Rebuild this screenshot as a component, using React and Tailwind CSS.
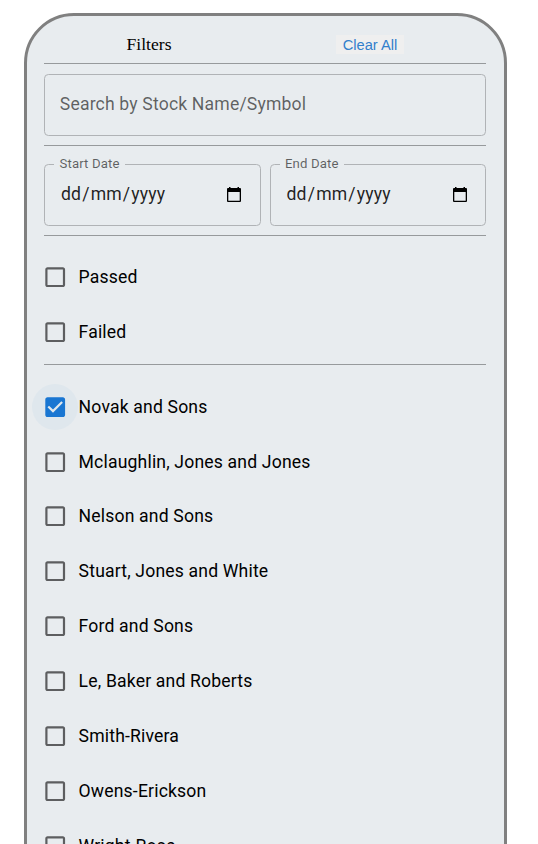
import { useState } from 'react';

const COMPANIES = [
  'Novak and Sons',
  'Mclaughlin, Jones and Jones',
  'Nelson and Sons',
  'Stuart, Jones and White',
  'Ford and Sons',
  'Le, Baker and Roberts',
  'Smith-Rivera',
  'Owens-Erickson',
  'Wright-Rose',
];

function Divider() {
  return <hr className="h-px w-full shrink-0 border-0 bg-[#979a9c]" />;
}

function CheckRow({ label, checked, focused, onToggle }) {
  return (
    <button
      type="button"
      role="checkbox"
      aria-checked={checked}
      onClick={onToggle}
      className="-ml-[12.1px] flex h-[54.85px] shrink-0 items-center text-left text-[17.6px] leading-[26.4px] tracking-[0.165px] text-black"
    >
      <span
        className={
          focused
            ? 'flex size-[46.2px] items-center justify-center rounded-full bg-[#1976d2]/4'
            : 'flex size-[46.2px] items-center justify-center rounded-full'
        }
      >
        <svg viewBox="0 0 24 24" className={checked ? 'size-[26.4px] fill-[#1976d2]' : 'size-[26.4px] fill-black/60'}>
          {checked ? (
            <path d="M19 3H5c-1.11 0-2 .9-2 2v14c0 1.1.89 2 2 2h14c1.11 0 2-.9 2-2V5c0-1.1-.89-2-2-2zm-9 14l-5-5 1.41-1.41L10 14.17l7.59-7.59L19 8l-9 9z" />
          ) : (
            <path d="M19 5v14H5V5h14m0-2H5c-1.1 0-2 .9-2 2v14c0 1.1.9 2 2 2h14c1.1 0 2-.9 2-2V5c0-1.1-.9-2-2-2z" />
          )}
        </svg>
      </span>
      <span className="pl-[0.5px] whitespace-nowrap">{label}</span>
    </button>
  );
}

function DateField({ label }) {
  return (
    <fieldset className="-mt-[7px] h-[69px] min-w-0 flex-1 rounded-[4.4px] border border-[#b0b3b6] pl-[9px]">
      <legend className="h-[14px] px-[5.5px] text-[13.2px] leading-[14px] tracking-[0.124px] text-black/60">
        {label}
      </legend>
      <div className="flex items-center justify-between pt-[10px] pr-[18.5px] pl-[6px]">
        <span className="flex text-[17.6px] leading-[26px] tracking-[0.165px] text-black/87">
          <span className="px-[1px]">dd</span>
          <span>/</span>
          <span className="px-[1px]">mm</span>
          <span>/</span>
          <span className="px-[1px]">yyyy</span>
        </span>
        <svg viewBox="0 0 14 15" className="mt-px h-[15px] w-[14px] fill-black">
          <path
            fillRule="evenodd"
            d="M2 0h1.5v1h7V0H12v1h1a1 1 0 0 1 1 1v12a1 1 0 0 1-1 1H1a1 1 0 0 1-1-1V2a1 1 0 0 1 1-1h1zM1.3 5v8.7h11.4V5z"
          />
        </svg>
      </div>
    </fieldset>
  );
}

export default function App() {
  const [selected, setSelected] = useState(['Novak and Sons']);
  const toggle = (name) =>
    setSelected((prev) => (prev.includes(name) ? prev.filter((n) => n !== name) : [...prev, name]));

  return (
    <div className="h-[844px] overflow-hidden bg-white pt-[13px] pl-6 font-['Roboto',sans-serif]">
      <main className="flex h-[900px] w-[483px] flex-col rounded-[50px] border-[3px] border-[#808080] bg-[#e8ecef] pr-[18px] pl-[17px]">
        <header className="mr-[5.5px] -ml-[5.5px] grid h-[47px] shrink-0 grid-cols-2 items-center pt-[10px]">
          <h1 className="pb-[2px] text-center font-['Liberation_Serif',serif] text-[17.6px] leading-5">Filters</h1>
          <button
            type="button"
            onClick={() => setSelected([])}
            className="h-[19px] w-[68px] justify-self-center bg-[#efefef] pt-px font-['Liberation_Sans',sans-serif] text-[14.667px] leading-[18px] whitespace-nowrap text-[#3380cc]"
          >
            Clear All
          </button>
        </header>
        <Divider />
        <input
          type="text"
          placeholder="Search by Stock Name/Symbol"
          className="mt-[10px] mb-[9px] h-[62px] shrink-0 rounded-[4.4px] border border-[#b0b3b6] bg-transparent px-[14.8px] pb-[3px] text-[17.6px] tracking-[0.165px] outline-none placeholder:text-black/60"
        />
        <Divider />
        <div className="mt-[18px] mb-[9px] flex h-[62px] shrink-0 gap-[9px]">
          <DateField label="Start Date" />
          <DateField label="End Date" />
        </div>
        <Divider />
        <div className="flex shrink-0 flex-col items-start pt-[14px] pb-[4.3px]">
          {['Passed', 'Failed'].map((name) => (
            <CheckRow key={name} label={name} checked={selected.includes(name)} onToggle={() => toggle(name)} />
          ))}
        </div>
        <Divider />
        <div className="flex flex-col items-start pt-[14.6px]">
          {COMPANIES.map((name, i) => (
            <CheckRow
              key={name}
              label={name}
              checked={selected.includes(name)}
              focused={i === 0}
              onToggle={() => toggle(name)}
            />
          ))}
        </div>
      </main>
    </div>
  );
}
